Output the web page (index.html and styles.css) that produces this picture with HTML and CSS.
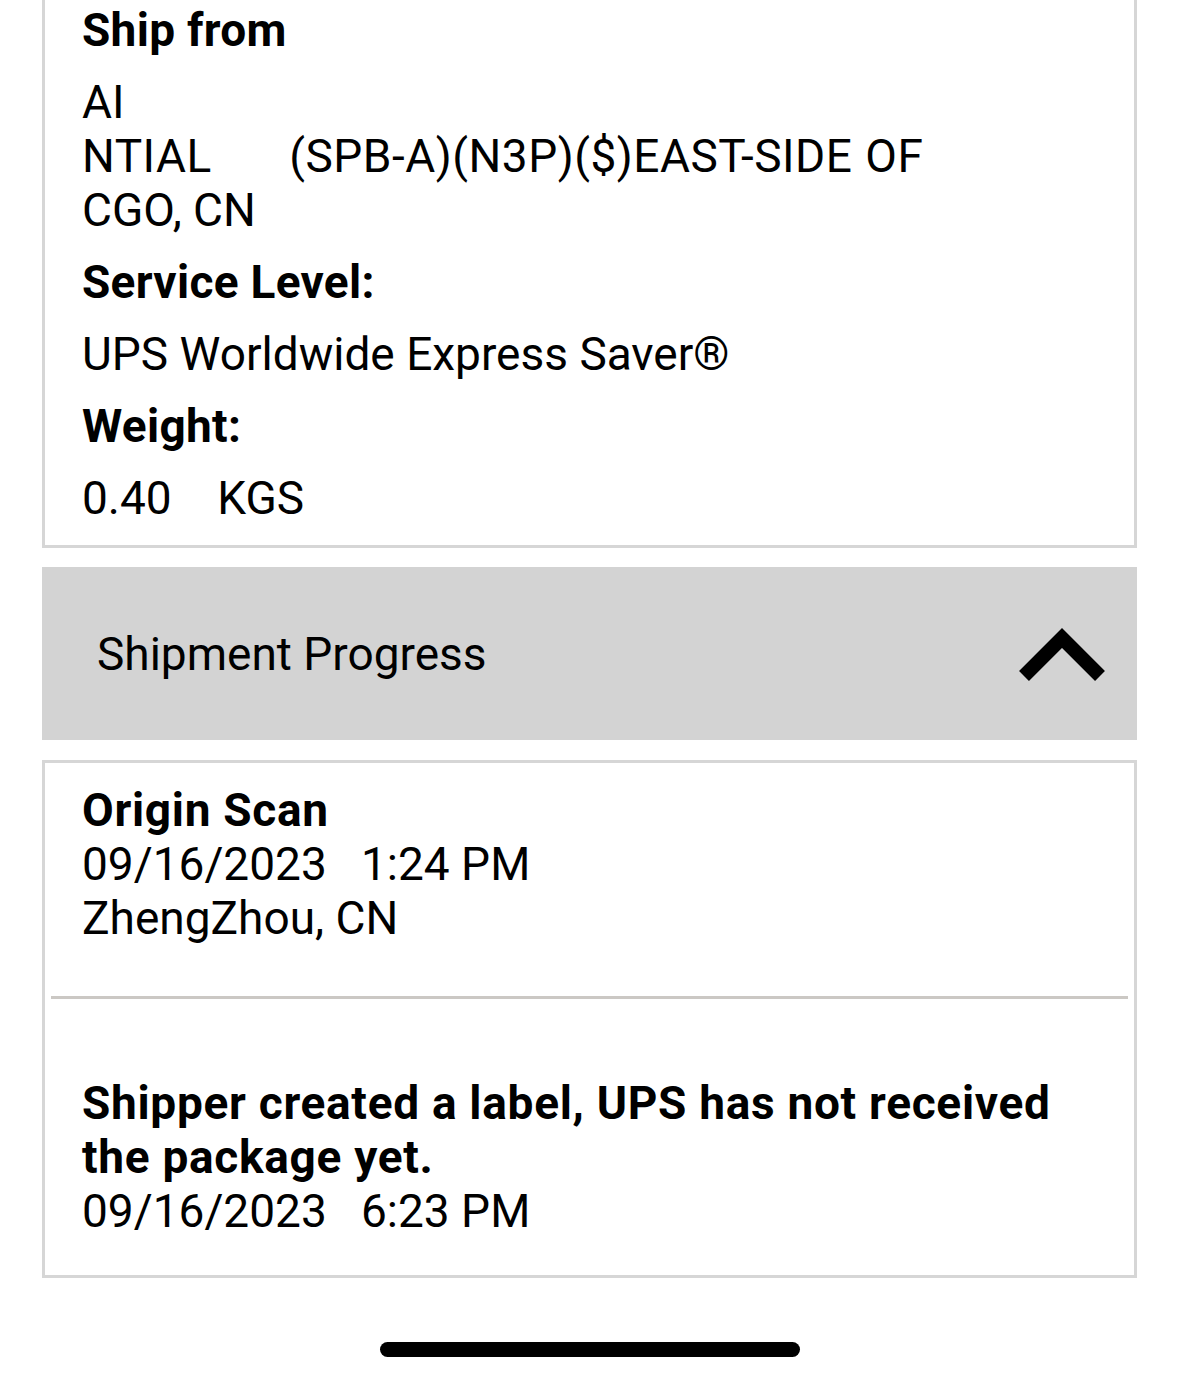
FILE: index.html
```html
<!DOCTYPE html>
<html>
<head>
<meta charset="utf-8">
<link rel="stylesheet" href="styles.css">
</head>
<body>
<div class="page">
  <section class="card card-details">
    <div class="label">Ship from</div>
    <div class="value address">
      <div>AI</div>
      <div class="pre">NTIAL      (SPB-A)(N3P)($)EAST-SIDE OF</div>
      <div>CGO, CN</div>
    </div>
    <div class="label">Service Level:</div>
    <div class="value">UPS Worldwide Express Saver®</div>
    <div class="label">Weight:</div>
    <div class="value pre">0.40    KGS</div>
  </section>

  <div class="accordion-head">
    <span class="accordion-title">Shipment Progress</span>
    <svg class="chevron" width="90" height="60" viewBox="0 0 90 60">
      <polyline points="7,52 45,14 83,52" fill="none" stroke="#000" stroke-width="14" stroke-linejoin="miter" stroke-miterlimit="10"/>
    </svg>
  </div>

  <section class="card card-progress">
    <div class="event event-first">
      <div class="event-title">Origin Scan</div>
      <div class="pre">09/16/2023   1:24 PM</div>
      <div>ZhengZhou, CN</div>
    </div>
    <div class="divider"></div>
    <div class="event event-second">
      <div class="event-title">Shipper created a label, UPS has not received the package yet.</div>
      <div class="pre">09/16/2023   6:23 PM</div>
    </div>
  </section>

  <div class="home-bar"></div>
</div>
</body>
</html>
```

FILE: styles.css
```css
html, body {
  margin: 0;
  padding: 0;
  background: #ffffff;
}

body {
  font-family: Roboto, "Noto Sans", sans-serif;
  font-size: 46px;
  line-height: 54px;
  color: #000;
  width: 1179px;
  height: 1381px;
  overflow: hidden;
}

.page {
  padding: 0 42px;
  display: flex;
  flex-direction: column;
}

.pre {
  white-space: pre;
}

.address .pre {
  word-spacing: 1px;
  letter-spacing: 0.5px;
}

.card {
  border: 3px solid #d6d6d6;
  background: #fff;
}

.card-details {
  border-top: none;
  padding: 3px 20px 20px 37px;
}

.label {
  font-weight: 700;
  letter-spacing: 0.3px;
  margin-bottom: 18px;
}

.value {
  margin-bottom: 18px;
}

.value:last-child {
  margin-bottom: 0;
}

.accordion-head {
  margin-top: 19px;
  height: 173px;
  background: #d3d3d3;
  display: flex;
  align-items: center;
  justify-content: space-between;
  padding: 0 30px 0 55px;
}

.accordion-title {
  font-weight: 400;
}

.chevron {
  display: block;
}

.card-progress {
  margin-top: 20px;
  padding: 0 6px;
}

.event {
  padding-left: 31px;
  padding-right: 40px;
}

.event-first {
  padding-top: 20px;
  padding-bottom: 51px;
}

.event-second {
  padding-top: 77px;
  padding-bottom: 37px;
}

.event-title {
  font-weight: 700;
  letter-spacing: 0.7px;
}

.divider {
  height: 3px;
  background: #cbc8c4;
}

.home-bar {
  align-self: center;
  margin-top: 64px;
  width: 420px;
  height: 15px;
  border-radius: 8px;
  background: #000;
}
```
